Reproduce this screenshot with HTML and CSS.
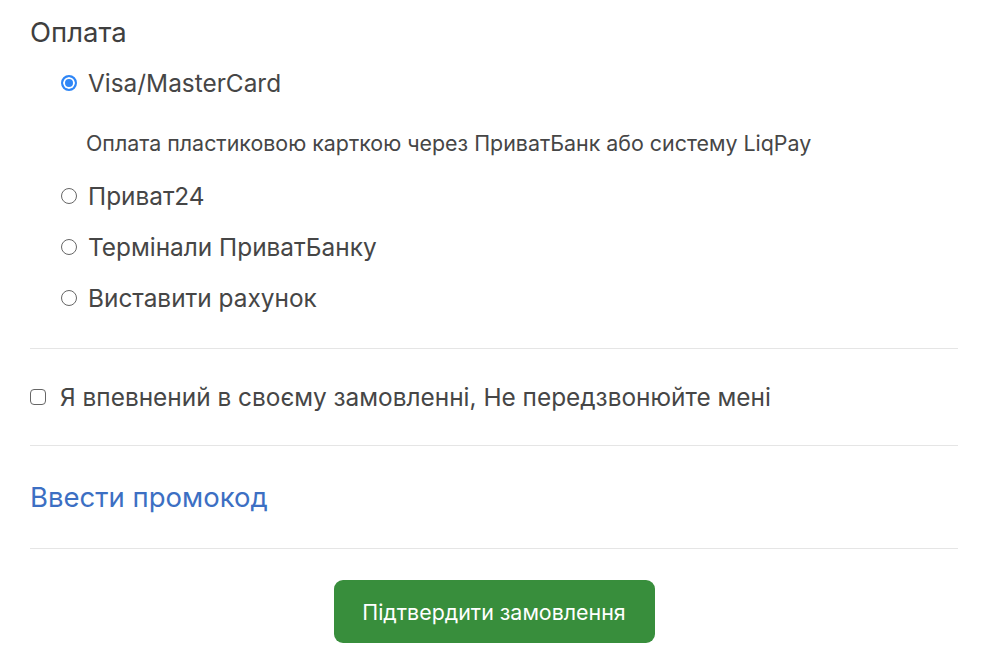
FILE: index.html
```html
<!DOCTYPE html>
<html lang="uk">
<head>
<meta charset="utf-8">
<link rel="stylesheet" href="styles.css">
</head>
<body>
<div class="page">
  <section class="payment">
    <h2 class="title">Оплата</h2>
    <div class="options">
      <label class="option first">
        <span class="radio checked"></span>
        <span class="opt-text">Visa/MasterCard</span>
      </label>
      <p class="desc">Оплата пластиковою карткою через ПриватБанк або систему LiqPay</p>
      <label class="option">
        <span class="radio"></span>
        <span class="opt-text">Приват24</span>
      </label>
      <label class="option">
        <span class="radio"></span>
        <span class="opt-text">Термінали ПриватБанку</span>
      </label>
      <label class="option">
        <span class="radio"></span>
        <span class="opt-text">Виставити рахунок</span>
      </label>
    </div>
  </section>
  <div class="confirm">
    <label class="check-row">
      <span class="checkbox"></span>
      <span class="check-text">Я впевнений в своєму замовленні, Не передзвонюйте мені</span>
    </label>
  </div>
  <div class="promo">
    <a class="promo-link" href="#">Ввести промокод</a>
  </div>
  <div class="actions">
    <button class="submit" type="button">Підтвердити замовлення</button>
  </div>
</div>
</body>
</html>
```
FILE: styles.css
```css
* { box-sizing: border-box; }
html, body { margin: 0; padding: 0; background: #fff; }
body {
  font-family: Inter, "Noto Sans", sans-serif;
  color: #444;
}
.page {
  width: 928px;
  margin-left: 30px;
}
.payment {
  padding-top: 14px;
  padding-bottom: 25px;
  border-bottom: 1px solid #e5e5e5;
}
.title {
  margin: 0;
  font-size: 27.5px;
  font-weight: 400;
  line-height: 36px;
  color: #3f3f3f;
}
.options {
  padding-left: 31px;
  margin-top: 15px;
}
.option {
  display: flex;
  align-items: center;
  height: 51px;
  font-size: 24.4px;
  color: #464646;
}
.option.first { height: 36px; }
.radio {
  width: 16px;
  height: 16px;
  border: 1.5px solid #666;
  border-radius: 50%;
  margin-right: 11px;
  flex: none;
}
.radio.checked {
  border: 2px solid #2f86f6;
  background: #2f86f6;
  box-shadow: inset 0 0 0 2px #fff;
}
.desc {
  margin: 0;
  padding: 28px 0 13px 25px;
  line-height: 28px;
  font-size: 21.4px;
  color: #464646;
}
.confirm {
  height: 97px;
  display: flex;
  align-items: center;
  border-bottom: 1px solid #e5e5e5;
}
.check-row {
  display: flex;
  align-items: center;
  font-size: 24.4px;
  color: #464646;
}
.checkbox {
  width: 16px;
  height: 16px;
  border: 1.5px solid #666;
  border-radius: 4px;
  margin-right: 14px;
  flex: none;
}
.promo {
  height: 103px;
  display: flex;
  align-items: center;
  border-bottom: 1px solid #e5e5e5;
}
.promo-link {
  font-size: 27.5px;
  color: #3c6fc3;
  text-decoration: none;
}
.actions {
  display: flex;
  justify-content: center;
  padding-top: 31px;
}
.submit {
  width: 321px;
  height: 63px;
  border: none;
  border-radius: 9px;
  background: #388e3c;
  color: #fff;
  font-family: Inter, "Noto Sans", sans-serif;
  font-size: 21.4px;
}
```
